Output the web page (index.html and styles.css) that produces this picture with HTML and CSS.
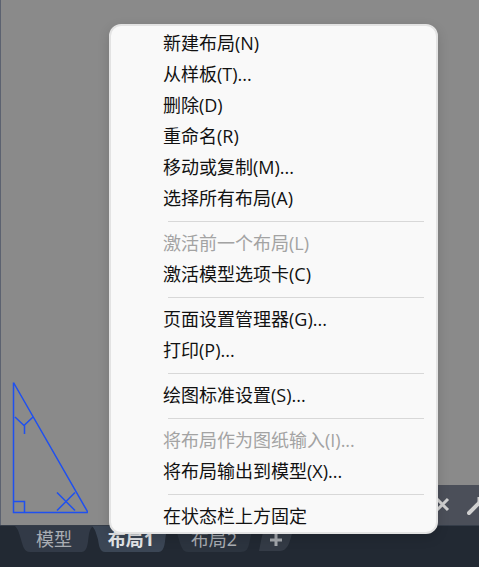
FILE: index.html
```html
<!DOCTYPE html>
<html lang="zh-CN">
<head>
  <meta charset="UTF-8">
  <meta name="viewport" content="width=device-width, initial-scale=1.0">
  <title>布局</title>
  <link rel="stylesheet" href="styles.css">
</head>
<body>
  <main class="canvas">
    <svg class="ucs-icon" width="80" height="136" viewBox="0 0 80 136" stroke-width="1.5">
      <path d="M5.5 4.5V134.5H80L5.5 4.5M5.5 123.5H16.5V134.5M7 39L16 47.5L25 39M16.5 47.5V56M49 114.5L67 132.5M67 114.5L49 132.5"/>
    </svg>
    <div class="command-bar">
      <button class="command-btn" aria-label="关闭">
        <svg width="16" height="16" viewBox="0 0 16 16"><path d="M2 2L13 13M13 2L2 13"/></svg>
      </button>
      <button class="command-btn" aria-label="自定义">
        <svg width="24" height="24" viewBox="0 0 24 24"><path class="handle" d="M2 20L14 8"/><path d="M12 9V4"/></svg>
      </button>
    </div>
  </main>

  <nav class="tabs">
    <button class="tab model">
      <svg viewBox="0 0 78 27" preserveAspectRatio="none"><path d="M0 0H78C74 4 74 9 73 16C72 23 71 27 65 27H15C9 27 8 21 6 14C4 7 3 3 0 0Z"/></svg>
      <span>模型</span>
    </button>
    <button class="tab active">
      <svg viewBox="0 0 78 27" preserveAspectRatio="none"><path d="M0 0H78C74 4 74 9 73 16C72 23 71 27 65 27H13C8 27 7 21 6 14C4 7 3 3 0 0Z"/></svg>
      <span>布局1</span>
    </button>
    <button class="tab">
      <svg viewBox="0 0 78 27" preserveAspectRatio="none"><path d="M0 0H78L74 19C73 24 71 27 66 27H13C8 27 7 23 5 18Z"/></svg>
      <span>布局2</span>
    </button>
    <button class="tab add" aria-label="新建布局">
      <svg viewBox="0 0 36 27" preserveAspectRatio="none"><path d="M8 0H36C33 9 32 26 22 26H1C3 17 4 6 8 0Z"/></svg>
      <span><svg class="plus" width="12" height="12" viewBox="0 0 12 12"><path d="M6 0V12M0 6H12"/></svg></span>
    </button>
  </nav>

  <div class="context-menu" role="menu">
    <button role="menuitem">新建布局(N)</button>
    <button role="menuitem">从样板(T)...</button>
    <button role="menuitem">删除(D)</button>
    <button role="menuitem">重命名(R)</button>
    <button role="menuitem">移动或复制(M)...</button>
    <button role="menuitem">选择所有布局(A)</button>
    <hr>
    <button role="menuitem" disabled>激活前一个布局(L)</button>
    <button role="menuitem">激活模型选项卡(C)</button>
    <hr>
    <button role="menuitem">页面设置管理器(G)...</button>
    <button role="menuitem">打印(P)...</button>
    <hr>
    <button role="menuitem">绘图标准设置(S)...</button>
    <hr>
    <button role="menuitem" disabled>将布局作为图纸输入(I)...</button>
    <button role="menuitem">将布局输出到模型(X)...</button>
    <hr>
    <button role="menuitem">在状态栏上方固定</button>
  </div>
</body>
</html>
```

FILE: styles.css
```css
* {
  margin: 0;
  padding: 0;
  box-sizing: border-box;
}

body {
  display: flex;
  flex-direction: column;
  position: relative;
  min-height: 100vh;
  overflow: hidden;
  background-color: #222933;
  font-family: "Open Sans", "Noto Sans CJK SC", sans-serif;
  font-size: 18px;
}

button {
  border: none;
  background: none;
  font: inherit;
}

.canvas {
  flex: 1;
  display: flex;
  align-items: flex-end;
  justify-content: space-between;
  background-color: #8a8a8a;
  border-left: 1px solid #5c6270;
}

.ucs-icon {
  margin: 0 0 11px 7px;
  fill: none;
  stroke: #1f50f0;
}

.command-bar {
  display: flex;
  align-items: center;
  justify-content: flex-end;
  gap: 16px;
  width: 240px;
  height: 40px;
  overflow: hidden;
  background-color: #4b4f59;
}

.command-btn {
  flex: none;
  display: flex;
}

.command-btn:last-child {
  margin-right: -12px;
}

.command-btn svg {
  fill: none;
  stroke: #d0d0d0;
  stroke-width: 3;
}

.command-btn .handle {
  stroke-width: 4;
  stroke-linecap: round;
}

.tabs {
  display: flex;
  align-items: flex-start;
  gap: 5px;
  height: 42px;
  padding-left: 15px;
  border-top: 1px solid #353d49;
}

.tab {
  position: relative;
  width: 78px;
  height: 26px;
  color: #a9adb3;
  line-height: 26px;
}

.tab > svg {
  position: absolute;
  inset: 0;
  width: 100%;
  height: 100%;
  fill: #2c343f;
}

.tab span {
  position: relative;
}

.tab.model {
  margin-right: -6px;
}

.tab.model > svg {
  fill: #323a47;
}

.tab.active {
  color: #e4e6e9;
  font-weight: bold;
}

.tab.active > svg {
  fill: #3b4655;
}

.tab.add {
  width: 36px;
}

.tab.add > svg {
  fill: #343b46;
}

.plus {
  stroke: #a3a7ac;
  stroke-width: 3;
}

.context-menu {
  position: absolute;
  left: 109px;
  bottom: 33px;
  width: 329px;
  padding-top: 2px;
  background-color: #f9f9f9;
  border: 2px solid #e3e3e3;
  border-radius: 12px;
  box-shadow: 0 4px 12px rgba(0, 0, 0, 0.15);
}

.context-menu button {
  display: block;
  width: 100%;
  height: 31px;
  padding-left: 52px;
  color: #111;
  line-height: 31px;
  text-align: left;
}

.context-menu button:hover {
  background-color: #ececec;
}

.context-menu button:disabled {
  color: #a3a3a3;
}

.context-menu hr {
  height: 1px;
  margin: 7px 12px 6px 57px;
  border: none;
  background-color: #d8d8d8;
}
```
